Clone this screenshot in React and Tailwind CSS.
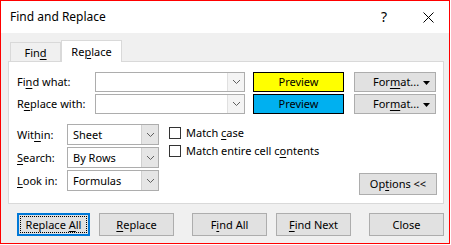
import React from "react";

const font = { fontFamily: '"Noto Sans", "Liberation Sans", sans-serif' };

// underlines the access-key letter
const K = ({ children }) => <span className="underline underline-offset-2">{children}</span>;

const Chevron = () => (
  <svg width="9" height="6" viewBox="0 0 9 6" className="text-[#606060]">
    <polyline points="1,1 4.5,4.5 8,1" fill="none" stroke="currentColor" strokeWidth="1" />
  </svg>
);

const Combo = ({ w }) => (
  <div className={`flex h-[20px] border border-[#adadad] bg-white ${w}`}>
    <div className="flex-1" />
    <div className="flex w-[17px] items-center justify-center border-l border-[#e0e0e0] bg-[#f4f4f4]">
      <Chevron />
    </div>
  </div>
);

const Select = ({ value }) => (
  <div className="flex h-[21px] w-[92px] border border-[#adadad] bg-white">
    <div className="flex flex-1 items-center pl-[5px] text-black">{value}</div>
    <div className="flex w-[17px] items-center justify-center border-l border-[#d0d0d0] bg-[#e5e5e5]">
      <Chevron />
    </div>
  </div>
);

const Btn = ({ children, w = "w-[75px]", focus }) =>
  focus ? (
    <div className={`flex h-[23px] ${w} items-center justify-center border-2 border-[#0078d7] bg-[#e1e1e1] p-[1px]`}>
      <div className="flex h-full w-full items-center justify-center border border-dotted border-black text-black">
        <span>{children}</span>
      </div>
    </div>
  ) : (
    <div className={`flex h-[23px] ${w} items-center justify-center border border-[#adadad] bg-[#e1e1e1] text-black`}>
      <span>{children}</span>
    </div>
  );

const FormatBtn = () => (
  <div className="relative flex h-[20px] w-[82px] items-center border border-[#adadad] bg-[#e1e1e1] pl-[18px] text-black">
    <span>For<K>m</K>at...</span>
    <svg width="7" height="4" viewBox="0 0 7 4" className="absolute right-[5px] top-[8px]">
      <polygon points="0,0 7,0 3.5,4" fill="#000" />
    </svg>
  </div>
);

const Check = ({ children }) => (
  <div className="flex h-[18px] items-center gap-[5px] text-black">
    <div className="h-[12px] w-[12px] border border-[#333] bg-white" />
    <span>{children}</span>
  </div>
);

export default function App() {
  return (
    <div className="h-[245px] w-[451px] bg-white text-[11px] leading-[16px]" style={font}>
      <div className="flex h-[244px] w-[450px] flex-col border border-[#ff0000]">
        {/* title bar */}
        <div className="flex h-[32px] items-center bg-white pl-[9px] text-[12px] text-black">
          <span className="flex-1">Find and Replace</span>
          <span className="mr-[36px] text-[14px]">?</span>
          <svg width="11" height="11" viewBox="0 0 11 11" className="mr-[15px]">
            <path d="M0.5 0.5 L10.5 10.5 M10.5 0.5 L0.5 10.5" stroke="#000" strokeWidth="1" />
          </svg>
        </div>

        <div className="flex flex-1 flex-col bg-[#f0f0f0] pl-[7px] pr-[5px] pt-[7px]">
          {/* tabs */}
          <div className="flex items-end pl-[2px]">
            <div className="-mb-px flex h-[20px] w-[51px] items-center justify-center border border-b-0 border-[#d9d9d9] bg-[#f0f0f0] text-black">
              <span>Fin<K>d</K></span>
            </div>
            <div className="relative z-10 -mb-px flex h-[22px] w-[61px] items-center justify-center border border-b-0 border-[#d9d9d9] bg-white text-black">
              <span>Re<K>p</K>lace</span>
            </div>
          </div>

          {/* panel */}
          <div className="flex h-[143px] flex-col border border-[#d9d9d9] bg-white pl-[8px] pr-[6px] pt-[10px]">
            <div className="flex items-center">
              <div className="w-[78px] text-black">Fi<K>n</K>d what:</div>
              <Combo w="w-[150px]" />
              <div className="ml-[8px] flex h-[20px] w-[91px] items-center justify-center border border-black bg-[#ffff00] text-black">
                Preview
              </div>
              <div className="ml-[10px]">
                <FormatBtn />
              </div>
            </div>
            <div className="mt-[2px] flex items-center">
              <div className="w-[78px] text-black">R<K>e</K>place with:</div>
              <Combo w="w-[150px]" />
              <div className="ml-[8px] flex h-[20px] w-[91px] items-center justify-center border border-black bg-[#00b0f0] text-black">
                Preview
              </div>
              <div className="ml-[10px]">
                <FormatBtn />
              </div>
            </div>

            <div className="mt-[10px] flex items-start">
              <div className="flex flex-col gap-[2px]">
                <div className="flex items-center">
                  <div className="w-[50px] text-black">Wit<K>h</K>in:</div>
                  <Select value="Sheet" />
                </div>
                <div className="flex items-center">
                  <div className="w-[50px] text-black"><K>S</K>earch:</div>
                  <Select value="By Rows" />
                </div>
                <div className="flex items-center">
                  <div className="w-[50px] text-black"><K>L</K>ook in:</div>
                  <Select value="Formulas" />
                </div>
              </div>
              <div className="ml-[10px] flex flex-col">
                <Check>Match <K>c</K>ase</Check>
                <Check>Match entire cell c<K>o</K>ntents</Check>
              </div>
              <div className="ml-auto mt-[49px] flex h-[22px] w-[78px] items-center justify-center border border-[#adadad] bg-[#e1e1e1] text-black">
                <span>Op<K>t</K>ions &lt;&lt;</span>
              </div>
            </div>
          </div>

          {/* bottom buttons */}
          <div className="mt-[9px] flex pl-[9px]">
            <Btn focus>Replace <K>A</K>ll</Btn>
            <div className="ml-[9px]"><Btn><K>R</K>eplace</Btn></div>
            <div className="ml-[18px]"><Btn>F<K>i</K>nd All</Btn></div>
            <div className="ml-[9px]"><Btn><K>F</K>ind Next</Btn></div>
            <div className="ml-[18px]"><Btn>Close</Btn></div>
          </div>
        </div>
      </div>
    </div>
  );
}
